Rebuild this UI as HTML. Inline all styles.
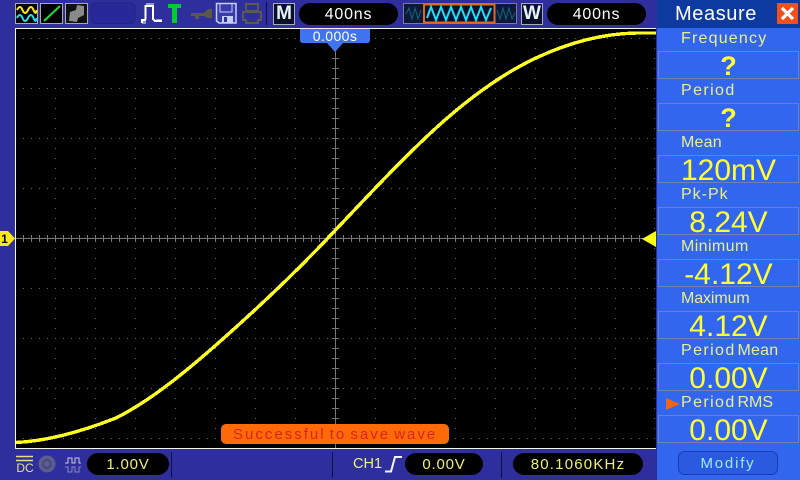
<!DOCTYPE html>
<html><head><meta charset="utf-8"><style>
html,body{margin:0;padding:0;background:#2e2e9c}
#s{position:relative;width:800px;height:480px;overflow:hidden;background:#2e2e9c;font-family:"Liberation Sans",sans-serif}
.a{position:absolute;white-space:nowrap}
.pill{position:absolute;background:#000;border-radius:12px;text-align:center;color:#fff;white-space:nowrap}
.lab{position:absolute;left:681px;color:#e8f08a;font-size:16px;letter-spacing:1.4px;line-height:18px;white-space:nowrap}
.box{position:absolute;left:658px;width:139px;height:26px;border:1px solid #6f82b8;text-align:center;color:#ffff33;font-size:30px;line-height:29px;white-space:nowrap}
</style></head><body><div id="s">
<div class="a" style="left:15px;top:28px;width:641px;height:421px;background:#000"></div>
<svg class="a" style="left:0;top:0" width="800" height="480">
<g stroke="#6a6a6a" stroke-width="1" shape-rendering="crispEdges" fill="none">
<path stroke-dasharray="1 7" d="M23 38.500H655M23 88.500H655M23 138.500H655M23 188.500H655M23 288.500H655M23 338.500H655M23 388.500H655M23 438.500H655"/>
<path stroke-dasharray="1 9" d="M55.500 38V446M95.500 38V446M135.500 38V446M175.500 38V446M215.500 38V446M255.500 38V446M295.500 38V446M375.500 38V446M415.500 38V446M455.500 38V446M495.500 38V446M535.500 38V446M575.500 38V446M615.500 38V446M654.500 38V446"/>
</g>
<g stroke="#777" stroke-width="1" shape-rendering="crispEdges" fill="none">
<path d="M16 238.500H655M335.500 50V448"/>
<path d="M23.500 235v7M31.500 235v7M39.500 235v7M47.500 235v7M55.500 235v7M63.500 235v7M71.500 235v7M79.500 235v7M87.500 235v7M95.500 235v7M103.500 235v7M111.500 235v7M119.500 235v7M127.500 235v7M135.500 235v7M143.500 235v7M151.500 235v7M159.500 235v7M167.500 235v7M175.500 235v7M183.500 235v7M191.500 235v7M199.500 235v7M207.500 235v7M215.500 235v7M223.500 235v7M231.500 235v7M239.500 235v7M247.500 235v7M255.500 235v7M263.500 235v7M271.500 235v7M279.500 235v7M287.500 235v7M295.500 235v7M303.500 235v7M311.500 235v7M319.500 235v7M327.500 235v7M343.500 235v7M351.500 235v7M359.500 235v7M367.500 235v7M375.500 235v7M383.500 235v7M391.500 235v7M399.500 235v7M407.500 235v7M415.500 235v7M423.500 235v7M431.500 235v7M439.500 235v7M447.500 235v7M455.500 235v7M463.500 235v7M471.500 235v7M479.500 235v7M487.500 235v7M495.500 235v7M503.500 235v7M511.500 235v7M519.500 235v7M527.500 235v7M535.500 235v7M543.500 235v7M551.500 235v7M559.500 235v7M567.500 235v7M575.500 235v7M583.500 235v7M591.500 235v7M599.500 235v7M607.500 235v7M615.500 235v7M623.500 235v7M631.500 235v7M639.500 235v7"/>
<path d="M332 58.500h7M332 68.500h7M332 78.500h7M332 88.500h7M332 98.500h7M332 108.500h7M332 118.500h7M332 128.500h7M332 138.500h7M332 148.500h7M332 158.500h7M332 168.500h7M332 178.500h7M332 188.500h7M332 198.500h7M332 208.500h7M332 218.500h7M332 228.500h7M332 248.500h7M332 258.500h7M332 268.500h7M332 278.500h7M332 288.500h7M332 298.500h7M332 308.500h7M332 318.500h7M332 328.500h7M332 338.500h7M332 348.500h7M332 358.500h7M332 368.500h7M332 378.500h7M332 388.500h7M332 398.500h7M332 408.500h7M332 418.500h7M332 428.500h7M332 438.500h7"/>
</g>
<path fill="none" stroke="#ffff22" stroke-width="3.400" shape-rendering="crispEdges" d="M16 442.500C49 441 83 431 116 418C149 401.500 183 374 216 345C253 312.500 291 277 328 238C364 200 400 161 436 128C469 98 503 73.500 536 58C570 42 605 33 640 33H656"/>
<g fill="none" stroke="#f4f4ff" stroke-width="1" shape-rendering="crispEdges">
<path d="M15.500 449V28.500H656"/><path d="M15 448.500H656"/>
</g>
<path d="M0 231H8L15 238.500 8 246H0Z" fill="#ffe81a"/>
<path d="M656 231V247L642 239Z" fill="#ffff10"/>
<path d="M300 29H370V40Q370 43 367 43H343L335 52 327 43H303Q300 43 300 40Z" fill="#3f74ee"/>
<rect x="15.500" y="3.500" width="22" height="20" fill="#000" stroke="#aaa"/>
<path d="M17 10q3-6 5.500 0t5.500 0 5.500 0 3 0" fill="none" stroke="#ffe81a" stroke-width="2"/>
<path d="M17 18q3-6 5.500 0t5.500 0 5.500 0 3 0" fill="none" stroke="#22e0f0" stroke-width="2"/>
<rect x="40.500" y="3.500" width="22" height="20" fill="#000" stroke="#aaa"/>
<path d="M44 21L60 6" stroke="#22dd33" stroke-width="2"/>
<rect x="65.500" y="3.500" width="22" height="20" fill="#111" stroke="#aaa"/>
<path d="M69 21L70 12 76 10 77 5 84 6 84 15 78 18 77 22Z" fill="#8a8a8a"/>
<rect x="91" y="3" width="44" height="20.500" rx="4" fill="#28289a" stroke="#1c2a80"/>
<path d="M142 23V20H145L145.500 19V6H153V19L155 21H162" fill="none" stroke="#fff" stroke-width="2"/>
<path d="M147 3V7M149 3V7M151 3V7M153 3V7M143 20V24M145 20V24M157 19V22M159 19V22M161 19V22" stroke="#fff" stroke-width="1"/>
<path d="M168 4H181V8H177V23H172V8H168Z" fill="#00cc33"/>
<path d="M191 13H204L208 9H212V18H208L204 16H199V19H195V16H191Z" fill="#5a5a45"/>
<path d="M216.500 3.500H236V23H219L216.500 21Z" fill="#3a3aaa" stroke="#c4d0f8" stroke-width="1.500"/>
<path d="M220 4V12H232V4" fill="none" stroke="#c4d0f8"/>
<rect x="222" y="16" width="11" height="7" fill="#c4d0f8"/><rect x="224" y="17" width="3" height="5" fill="#2e2e9c"/>
<path d="M246 4H258V11H246ZM243 12H261V20H258V23H246V20H243Z" fill="none" stroke="#5a5a50" stroke-width="2"/>
<path d="M266.500 2V25" stroke="#10104c"/>
<rect x="273.500" y="3.500" width="21" height="21" fill="#0a0f2a" stroke="#aab"/>
<rect x="521.500" y="3.500" width="21" height="21" fill="#0a0f2a" stroke="#aab"/>
<rect x="403.500" y="3.500" width="113" height="20" fill="#10183a" stroke="#777c99"/>
<path d="M406 14L409 8 412 19 415 8 418 19 421 10M497 10L500 19 503 8 506 19 509 8 512 19 515 13" fill="none" stroke="#0d6a72" stroke-width="1"/>
<rect x="424" y="4.500" width="70.500" height="18" fill="#0a1030" stroke="#e06820" stroke-width="2"/>
<path d="M427 18L431 7 436 20 441 7 446 20 451 7 456 20 461 7 466 20 471 7 476 20 481 7 486 20 491 8" fill="none" stroke="#22e0f0" stroke-width="2"/>
<path d="M171.500 452V478M332.500 452V478M501.500 452V478" stroke="#10104c"/>
<path d="M16 456.500H33M16 460.500H33" stroke="#e8e080" stroke-width="1.500"/>
<circle cx="47" cy="464" r="8.500" fill="#5c5c90"/>
<circle cx="47" cy="464" r="4" fill="none" stroke="#48487c" stroke-width="2"/>
<path d="M65 463H68V458H72V463H75V458H79V463H81" fill="none" stroke="#c8c8e0" stroke-width="1"/>
<path d="M65 467H68V472H72V467H75V472H79V467H81" fill="none" stroke="#8a8ac0" stroke-width="1"/>
<path d="M385 471.500H391L395 457H402" fill="none" stroke="#f4f4ff" stroke-width="2"/>
<rect x="657" y="0" width="143" height="480" fill="#3366ee"/>
<rect x="657" y="0" width="143" height="28" fill="#0c3a9e"/>
<rect x="777" y="3" width="21" height="21" fill="#f0501c"/>
<path d="M782 8L793 19M793 8L782 19" stroke="#fff" stroke-width="3.200"/>
<path d="M666 398L680 404 666 410Z" fill="#f26414"/>
<rect x="678.500" y="451.500" width="99" height="23" rx="6" fill="#2a5ae0" stroke="#1a3cb4"/>
</svg>
<div class="a" style="left:300px;top:28px;width:70px;text-align:center;color:#fff;font-size:14px;line-height:17px;letter-spacing:.4px">0.000s</div>
<div class="a" style="left:273px;top:3px;width:22px;text-align:center;color:#e4f4f8;font-size:19px;font-weight:bold;line-height:21px">M</div>
<div class="a" style="left:521px;top:3px;width:22px;text-align:center;color:#e4f4f8;font-size:19px;font-weight:bold;line-height:21px">W</div>
<div class="pill" style="left:299px;top:3px;width:99px;height:22px;font-size:16px;line-height:23px;letter-spacing:.8px">400ns</div>
<div class="pill" style="left:547px;top:3px;width:99px;height:22px;font-size:16px;line-height:23px;letter-spacing:.8px">400ns</div>
<div class="a" style="left:221px;top:424px;width:228px;height:20px;background:#ff6a08;border-radius:5px;color:#d8261c;font-size:15px;line-height:21px;letter-spacing:2px;word-spacing:-2px;text-indent:12px">Successful to save wave</div>
<div class="a" style="left:16px;top:461px;width:18px;text-align:center;color:#e8e080;font-size:12px;line-height:14px">DC</div>
<div class="pill" style="left:87px;top:453px;width:82px;height:22px;color:#f0f070;font-size:15px;line-height:23px;letter-spacing:.8px">1.00V</div>
<div class="a" style="left:353px;top:455px;color:#e8f08a;font-size:14.500px;line-height:18px">CH1</div>
<div class="pill" style="left:405px;top:453px;width:78px;height:22px;color:#f0f070;font-size:15px;line-height:23px;letter-spacing:.8px">0.00V</div>
<div class="pill" style="left:513px;top:453px;width:130px;height:22px;color:#f0f070;font-size:15px;line-height:23px;letter-spacing:1.200px">80.1060KHz</div>
<div class="a" style="left:675px;top:1px;color:#fff;font-size:20px;line-height:26px;letter-spacing:.6px">Measure</div>
<div class="lab" style="top:30px;letter-spacing:1.200px">Frequency</div>
<div class="box" style="top:51px;font-weight:bold;font-size:27px;line-height:28px">?</div>
<div class="lab" style="top:82px">Period</div>
<div class="box" style="top:103px;font-weight:bold;font-size:27px;line-height:28px">?</div>
<div class="lab" style="top:134px;letter-spacing:.2px">Mean</div>
<div class="box" style="top:155px">120mV</div>
<div class="lab" style="top:186px;letter-spacing:1px">Pk-Pk</div>
<div class="box" style="top:207px">8.24V</div>
<div class="lab" style="top:238px;letter-spacing:.4px">Minimum</div>
<div class="box" style="top:259px">-4.12V</div>
<div class="lab" style="top:290px;letter-spacing:-.1px">Maximum</div>
<div class="box" style="top:311px">4.12V</div>
<div class="lab" style="top:342px;word-spacing:-4px">Period <span style="letter-spacing:.2px">Mean</span></div>
<div class="box" style="top:363px">0.00V</div>
<div class="lab" style="top:394px;word-spacing:-4px">Period <span style="letter-spacing:0">RMS</span></div>
<div class="box" style="top:415px">0.00V</div>
<div class="a" style="left:678px;top:452px;width:100px;text-align:center;color:#9cecf4;font-size:15px;line-height:23px;letter-spacing:1.800px">Modify</div>
<div class="a" style="left:0;top:231px;width:9px;text-align:center;color:#000;font-size:12px;font-weight:bold;line-height:16px">1</div>
</div></body></html>
